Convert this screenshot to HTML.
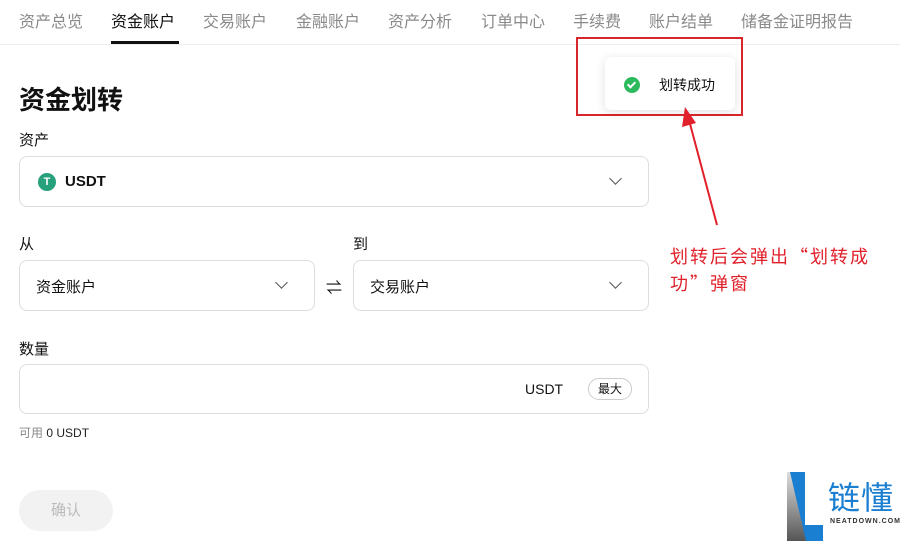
<!DOCTYPE html>
<html><head><meta charset="utf-8"><style>
*{margin:0;padding:0;box-sizing:border-box}
body{width:900px;height:541px;overflow:hidden;background:#fff;font-family:"Liberation Sans","Noto Sans CJK SC",sans-serif;position:relative;color:#111}
.a{position:absolute}
.nav span{position:absolute;top:8px;font-size:16px;color:#8a8a8a}
.box{position:absolute;border:1px solid #ddd;border-radius:8px;background:#fff}
.lbl{position:absolute;font-size:15px;color:#111}
.chev{position:absolute;width:9px;height:9px;border-right:1.6px solid #555;border-bottom:1.6px solid #555;transform:rotate(45deg)}
</style></head><body>
<div class="nav">
<span style="left:19px">资产总览</span>
<span style="left:111px;color:#111">资金账户</span>
<span style="left:203px">交易账户</span>
<span style="left:296px">金融账户</span>
<span style="left:388px">资产分析</span>
<span style="left:481px">订单中心</span>
<span style="left:573px">手续费</span>
<span style="left:649px">账户结单</span>
<span style="left:741px">储备金证明报告</span>
</div>
<div class="a" style="left:111px;top:41px;width:68px;height:3px;background:#111"></div>
<div class="a" style="left:0;top:44px;width:900px;height:1px;background:#eee"></div>
<div class="a" style="left:19px;top:80px;font-size:26px;font-weight:bold">资金划转</div>
<div class="lbl" style="left:19px;top:129px">资产</div>
<div class="box" style="left:19px;top:156px;width:630px;height:51px"></div>
<div class="a" style="left:38px;top:173px;width:18px;height:18px;border-radius:50%;background:#26a17b;color:#fff;font-size:11px;font-weight:bold;text-align:center;line-height:18px">T</div>
<div class="a" style="left:65px;top:173px;font-size:15px;font-weight:bold">USDT</div>
<div class="chev" style="left:611px;top:174px"></div>
<div class="lbl" style="left:19px;top:233px">从</div>
<div class="lbl" style="left:353px;top:233px">到</div>
<div class="box" style="left:19px;top:260px;width:296px;height:51px"></div>
<div class="a" style="left:36px;top:276px;font-size:15px">资金账户</div>
<div class="chev" style="left:277px;top:278px"></div>
<div class="a" style="left:326px;top:274px;font-size:16px">⇌</div>
<div class="box" style="left:353px;top:260px;width:296px;height:51px"></div>
<div class="a" style="left:370px;top:276px;font-size:15px">交易账户</div>
<div class="chev" style="left:611px;top:278px"></div>
<div class="lbl" style="left:19px;top:338px">数量</div>
<div class="box" style="left:19px;top:364px;width:630px;height:50px"></div>
<div class="a" style="left:525px;top:381px;font-size:14px">USDT</div>
<div class="a" style="left:588px;top:378px;width:44px;height:22px;border:1px solid #ccc;border-radius:11px;font-size:12px;text-align:center;line-height:20px">最大</div>
<div class="a" style="left:19px;top:424px;font-size:12px;color:#888">可用 <span style="color:#222">0 USDT</span></div>
<div class="a" style="left:19px;top:490px;width:94px;height:41px;border-radius:21px;background:#f2f2f2;color:#bbb;font-size:15px;text-align:center;line-height:41px">确认</div>
<div class="a" style="left:576px;top:37px;width:167px;height:79px;border:2px solid #d9262b"></div>
<div class="a" style="left:605px;top:57px;width:130px;height:53px;background:#fff;border-radius:6px;box-shadow:0 2px 10px rgba(0,0,0,.12)"></div>
<div class="a" style="left:624px;top:77px;width:16px;height:16px;border-radius:50%;background:#2dba5e"></div>
<div class="a" style="left:629px;top:80px;width:5px;height:8px;border-right:2px solid #fff;border-bottom:2px solid #fff;transform:rotate(45deg)"></div>
<div class="a" style="left:659px;top:75px;font-size:14px">划转成功</div>
<svg class="a" style="left:680px;top:105px" width="45" height="125"><line x1="37" y1="120" x2="9" y2="15" stroke="#e0202a" stroke-width="2"/><polygon points="5,2 2,22 16,18" fill="#e0202a"/></svg>
<div class="a" style="left:670px;top:243px;font-size:18px;color:#e0202a;line-height:27px;width:212px;font-family:'Noto Sans CJK SC',sans-serif;letter-spacing:2px">划转后会弹出“划转成功”弹窗</div>
<svg class="a" style="left:787px;top:472px" width="40" height="69"><defs><linearGradient id="g" x1="0" y1="0" x2="0" y2="1"><stop offset="0" stop-color="#ddd"/><stop offset="1" stop-color="#555"/></linearGradient></defs>
<polygon points="0,0 18,0 18,53 36,53 36,69 0,69" fill="#1a7fd0"/>
<polygon points="0,0 3,0 19,69 0,69" fill="url(#g)"/></svg>
<div class="a" style="left:828px;top:480px;font-size:32px;color:#1a7fd0;letter-spacing:1px;line-height:36px">链懂</div>
<div class="a" style="left:830px;top:518px;font-size:7px;color:#333;letter-spacing:1px;font-weight:bold">NEATDOWN.COM</div>
</body></html>
